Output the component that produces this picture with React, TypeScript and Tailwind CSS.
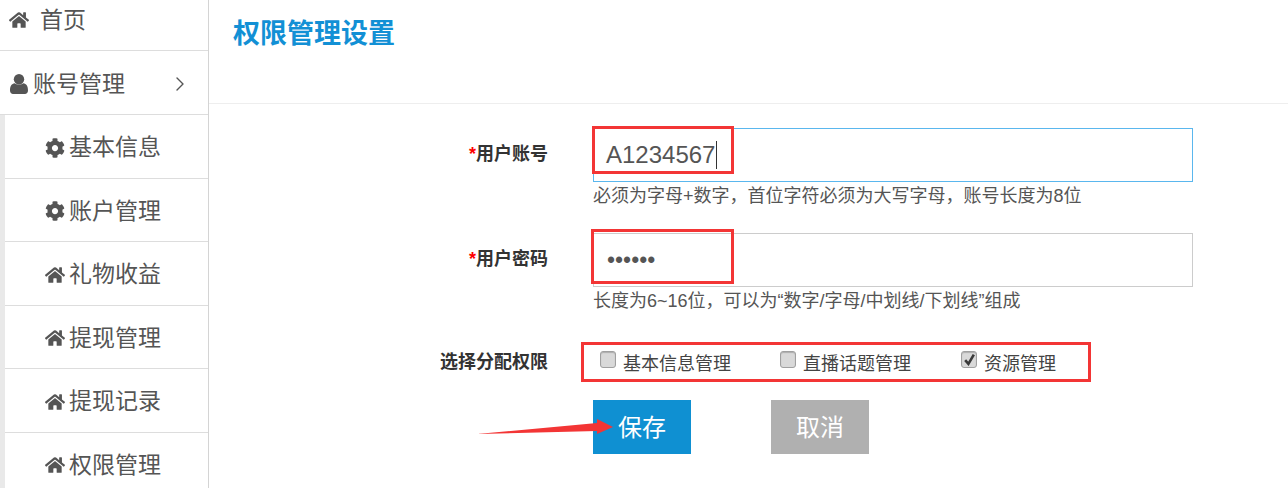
import { ChevronRight } from 'lucide-react'
import { FaCog, FaHome } from 'react-icons/fa'

const subMenu = [
  { label: '基本信息', icon: FaCog },
  { label: '账户管理', icon: FaCog },
  { label: '礼物收益', icon: FaHome },
  { label: '提现管理', icon: FaHome },
  { label: '提现记录', icon: FaHome },
  { label: '权限管理', icon: FaHome },
]

const permissions = [
  { label: '基本信息管理', width: 'w-[180px]', checked: false },
  { label: '直播话题管理', width: 'w-[181px]', checked: false },
  { label: '资源管理', width: 'w-[110px]', checked: true },
]

function UserIcon() {
  return (
    <svg viewBox="0 0 18 20" className="h-[20px] w-[18px] shrink-0" fill="currentColor">
      <circle cx="9" cy="5.3" r="5.2" />
      <path d="M0 16.5 C0 12 1.8 9.5 4.6 9.2 C6.5 11 11.5 11 13.4 9.2 C16.2 9.5 18 12 18 16.5 C18 18.8 16.6 20 15 20 H3 C1.4 20 0 18.8 0 16.5 Z" />
    </svg>
  )
}

function Sidebar() {
  return (
    <aside className="w-[209px] shrink-0 border-r border-[#d4d4d4] text-[23px] leading-none text-[#555]">
      <div className="flex h-[51px] items-center gap-[11px] border-b border-[#ddd] pb-[10px] pl-[9px]">
        <FaHome className="text-[20px]" />
        <span>首页</span>
      </div>
      <div className="flex h-[64px] items-center border-b border-[#ddd] pl-[10px] pt-[3px]">
        <UserIcon />
        <span className="ml-[5px]">账号管理</span>
        <ChevronRight className="ml-[43px] h-[24px] w-[24px]" strokeWidth={1.4} />
      </div>
      <div className="border-l-[5px] border-[#e9e9e9]">
        {subMenu.map((item) => (
          <div key={item.label} className="flex h-[63.5px] items-center gap-[4px] border-b border-[#ddd] pl-[40px] pt-[3px]">
            <item.icon className="text-[20px]" />
            <span>{item.label}</span>
          </div>
        ))}
      </div>
    </aside>
  )
}

function Checkbox({ checked }: { checked: boolean }) {
  return (
    <span className="mb-[5px] flex h-[17px] w-[16px] shrink-0 items-center justify-center rounded-[3px] border border-[#a0a0a0] bg-[#d9d9d9] shadow-[inset_0_1px_1px_rgba(0,0,0,0.2)]">
      {checked && (
        <svg viewBox="0 0 12 12" className="h-[13px] w-[13px]">
          <path d="M2 6.5 L5 10 L10 1.5" fill="none" stroke="#3a3a3a" strokeWidth="2.4" />
        </svg>
      )}
    </span>
  )
}

export default function App() {
  return (
    <div className="relative flex h-[488px] w-[1288px] overflow-hidden bg-white font-['Liberation_Sans','Noto_Sans_CJK_SC',sans-serif]">
      <Sidebar />

      <main className="flex-1">
        <div className="h-[104px] border-b border-[#eeeeee] pl-[24px] pt-[17px] text-[27px] font-bold leading-[34px] text-[#1290d5]">
          权限管理设置
        </div>

        <div className="pt-[24px] text-[18px] text-[#555]">
          <div className="flex items-center">
            <label className="w-[339px] pb-[2px] text-right text-[18px] font-bold text-[#333]">
              <span className="text-[#f00]">*</span>用户账号
            </label>
            <div className="ml-[45px] flex h-[54px] w-[600px] items-center border border-[#5ab7ee] pl-[12px] text-[24px]">
              A1234567
              <span className="ml-[1px] h-[28px] w-px bg-[#333]" />
            </div>
          </div>
          <p className="ml-[384px] h-[28px] leading-[28px]">必须为字母+数字，首位字符必须为大写字母，账号长度为8位</p>

          <div className="mt-[23px] flex items-center">
            <label className="w-[339px] pb-[2px] text-right text-[18px] font-bold text-[#333]">
              <span className="text-[#f00]">*</span>用户密码
            </label>
            <div className="ml-[45px] flex h-[54px] w-[600px] items-center border border-[#ccc] pl-[13px] text-[23px]">
              ••••••
            </div>
          </div>
          <p className="ml-[384px] h-[28px] leading-[28px]">长度为6~16位，可以为“数字/字母/中划线/下划线”组成</p>

          <div className="mt-[27px] flex h-[40px] items-center">
            <label className="w-[339px] text-right text-[18px] font-bold text-[#333]">选择分配权限</label>
            <div className="ml-[52px] flex items-center text-[#444]">
              {permissions.map((item) => (
                <div key={item.label} className={`flex items-center gap-[7px] ${item.width}`}>
                  <Checkbox checked={item.checked} />
                  <span className="pt-[5px]">{item.label}</span>
                </div>
              ))}
            </div>
          </div>

          <div className="ml-[384px] mt-[18px] flex gap-[80px] text-[24px] text-white">
            <button className="h-[54px] w-[98px] bg-[#0f90d2] pt-[2px]">保存</button>
            <button className="h-[54px] w-[98px] bg-[#b0b0b0] pt-[2px]">取消</button>
          </div>
        </div>
      </main>

      {/* annotations drawn over the screenshot */}
      <div className="absolute left-[592px] top-[126px] h-[48px] w-[142px] border-[3px] border-[#f33535]" />
      <div className="absolute left-[591px] top-[229px] h-[55px] w-[143px] border-[3px] border-[#f33535]" />
      <div className="absolute left-[581px] top-[342px] h-[40px] w-[510px] border-[3px] border-[#f33535]" />
      <svg className="absolute left-[476px] top-[416px]" width="142" height="22" viewBox="476 416 142 22">
        <polygon points="477,434 597,423 597,419 613,427 597,434 597,431" fill="#f33535" />
      </svg>
    </div>
  )
}
